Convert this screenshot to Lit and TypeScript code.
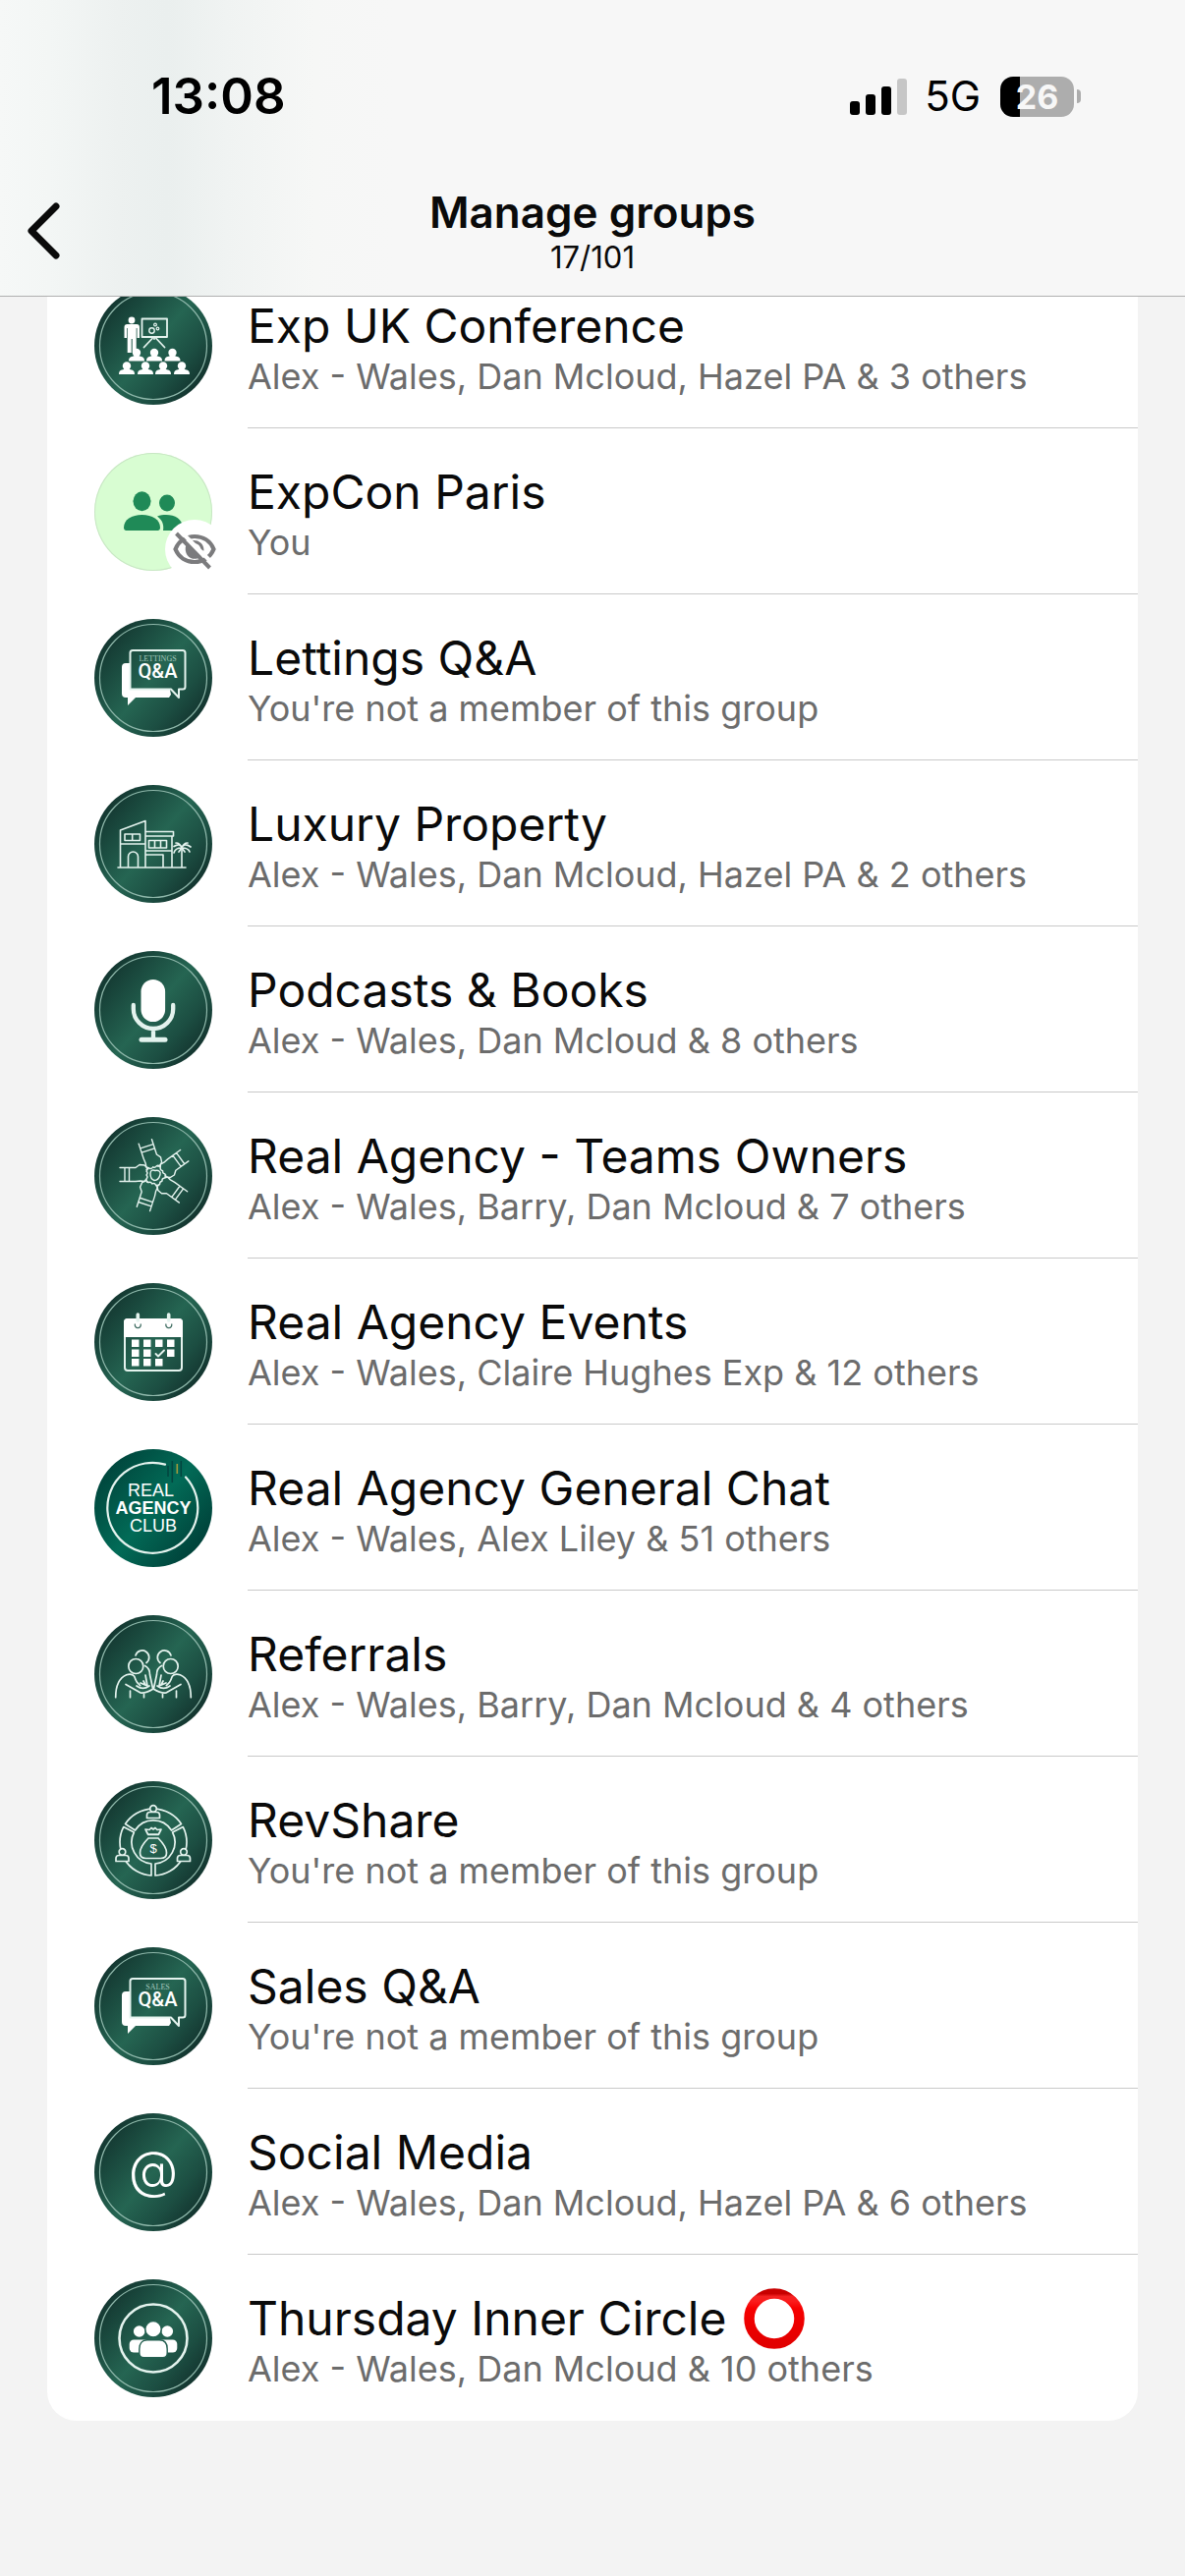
import { css, html, LitElement, nothing, svg, SVGTemplateResult } from "lit";
import { customElement, property } from "lit/decorators.js";
import { classMap } from "lit/directives/class-map.js";

type Group = {
  icon: string;
  name: string;
  members: string;
  ring?: boolean;
};

const groups: Group[] = [
  {
    icon: "conference",
    name: "Exp UK Conference",
    members: "Alex - Wales, Dan Mcloud, Hazel PA & 3 others",
  },
  { icon: "hidden", name: "ExpCon Paris", members: "You" },
  {
    icon: "lettings",
    name: "Lettings Q&A",
    members: "You're not a member of this group",
  },
  {
    icon: "house",
    name: "Luxury Property",
    members: "Alex - Wales, Dan Mcloud, Hazel PA & 2 others",
  },
  {
    icon: "mic",
    name: "Podcasts & Books",
    members: "Alex - Wales, Dan Mcloud & 8 others",
  },
  {
    icon: "hands",
    name: "Real Agency - Teams Owners",
    members: "Alex - Wales, Barry, Dan Mcloud & 7 others",
  },
  {
    icon: "calendar",
    name: "Real Agency Events",
    members: "Alex - Wales, Claire Hughes Exp & 12 others",
  },
  {
    icon: "club",
    name: "Real Agency General Chat",
    members: "Alex - Wales, Alex Liley & 51 others",
  },
  {
    icon: "referrals",
    name: "Referrals",
    members: "Alex - Wales, Barry, Dan Mcloud & 4 others",
  },
  {
    icon: "revshare",
    name: "RevShare",
    members: "You're not a member of this group",
  },
  {
    icon: "sales",
    name: "Sales Q&A",
    members: "You're not a member of this group",
  },
  {
    icon: "social",
    name: "Social Media",
    members: "Alex - Wales, Dan Mcloud, Hazel PA & 6 others",
  },
  {
    icon: "circle",
    name: "Thursday Inner Circle",
    members: "Alex - Wales, Dan Mcloud & 10 others",
    ring: true,
  },
];

const audience = [
  [43, 67],
  [61, 67],
  [79.5, 67],
  [33, 80.5],
  [52, 80.5],
  [70, 80.5],
  [89, 80.5],
];

const days = [
  [38, 57.5],
  [50, 57.5],
  [62, 57.5],
  [74, 57.5],
  [38, 67.5],
  [50, 67.5],
  [74, 67.5],
  [38, 77],
  [50, 77],
  [62, 77],
];

const qa = (label: string) => svg`
  <path class="solid" d="M36 45h-4a4 4 0 0 0-4 4v27a4 4 0 0 0 4 4h2v8l8-8h34l2-3-1-5H36z" />
  <path
    class="line"
    stroke-width="2"
    d="M39 32h51a2.5 2.5 0 0 1 2.5 2.5V69a2.5 2.5 0 0 1-2.5 2.5h-4V80l-8-8.5H36.5v-37A2.5 2.5 0 0 1 39 32z"
  />
  <text class="serif" x="64.5" y="43" text-anchor="middle">${label}</text>
  <text class="qa" x="64.5" y="60" text-anchor="middle">Q&amp;A</text>
`;

const icons: Record<string, () => SVGTemplateResult> = {
  conference: () => svg`
    <circle class="solid" cx="38" cy="34" r="3.4" />
    <path class="solid" d="M34 38h9a3 3 0 0 1 3 3v11h-2.5V42h-.8v25h-4V53h-1v14h-4V42H33v10h-2.5V41a3 3 0 0 1 3-3z" />
    <path class="line" stroke-width="1.8" d="M48.5 32.5H74V51H48.5zM61 51v2M59 52.5l-8.5 9M63 52.5l8.5 9" />
    <circle class="line" stroke-width="1.4" cx="58.5" cy="44.5" r="2.7" />
    <circle class="line" stroke-width="1.2" cx="62" cy="38.5" r="1.4" />
    <circle class="line" stroke-width="1.2" cx="64.5" cy="42.5" r="1.3" />
    ${audience.map(
      ([x, y]) => svg`
        <circle class="solid" cx=${x} cy=${y} r="4.2" />
        <path class="solid" transform="translate(${x} ${y})" d="M-8 8.5c0-3 1-4 4-4.7l2-.8h4l2 .8c3 .7 4 1.7 4 4.7z" />
      `
    )}
  `,
  hidden: () => svg`
    <g fill="#1f8a57">
      <ellipse cx="48.5" cy="49.3" rx="9" ry="10" />
      <path d="M30 76c0-8 8-13 18.5-13S67 68 67 76c0 2-1 3-2.5 3h-32C31 79 30 78 30 76z" />
      <ellipse cx="74" cy="51" rx="8" ry="8.5" />
      <path d="M64 64.5c3-1.2 6-1.5 9-1.5 9 0 17 4.5 17 13 0 2-1 3-2.5 3H70c1-6-1-11-6-14.5z" />
    </g>
    <circle cx="102" cy="98" r="30" fill="#fff" />
    <g fill="none" stroke="#7b7b7d">
      <path stroke-width="4.2" d="M82.5 98c3.5-8.5 11-13 19.5-13s16 4.5 19.5 13c-3.5 8.5-11 13-19.5 13s-16-4.5-19.5-13z" />
      <path stroke-width="3" d="M100 90.5c6-.5 10 3 10 9" />
    </g>
    <path fill="#7b7b7d" d="M95 91.5L108.5 105a9 9 0 0 1-15-3c-1.5-4-1-8 1.5-10.5z" />
    <path stroke="#fff" stroke-width="4" d="M87 79l36 36" />
    <path stroke="#7b7b7d" stroke-width="4" d="M83.5 82l34 35" />
  `,
  lettings: () => qa("LETTINGS"),
  house: () => svg`
    <path
      class="line"
      stroke-width="1.6"
      d="M24 84h69M26.5 84V46L52 36.5V84M26.5 60H52M31 50h15.5v6.5H31zM38.7 50v6.5M34.5 84V73a5 5 0 0 1 10 0v11M52 47.5h28.5V52H52M79 52v32M55.5 56.5h18V64h-18zM61.5 56.5V64M67.5 56.5V64M52 67h27M52 71h18v13M89 65v19"
    />
    <path
      class="line"
      stroke-width="1.7"
      d="M89 64c-1-4-4-4-8-1.5M89 64c-1-3-3-5-6-5M89 64c1-3 3-5 6-5M89 64c1-4 5-4 9-1M89 64c-4 0-7 1-8 5M89 64c4 0 7 1 8 4M89 64l-3 4M89 64l3 4"
    />
  `,
  mic: () => svg`
    <rect class="solid" x="47.5" y="29" width="24.6" height="43" rx="12.3" />
    <path class="line" stroke-width="4.3" d="M39.8 55v4a20.2 20 0 0 0 40.4 0v-4M60 79v11" />
    <path class="line" stroke-width="5" d="M48 90.3h24" />
  `,
  hands: () => svg`
    <g class="line" stroke-width="1.4" transform="translate(62 59.5)">
      ${[0, 72, 144, 216, 288].map(
        (angle) => svg`
          <path
            transform="rotate(${angle})"
            d="M-36-8h16M-36 6h16M-31-8V6M-26.5-8V6M-20-8l4-3 5 .5 2 2q2 2 0 4q2 2 0 4q2 2 0 4l-2 2.5-4-.5-5 .5M-9-6l2-1"
          />
        `
      )}
      <path d="M-5-2c0-4 3-4 5-3 3-1 6 1 5 4-1 4-3 6-6 6-3-1-4-3-4-7z" />
    </g>
  `,
  calendar: () => svg`
    <rect class="line" stroke-width="2" x="31" y="37" width="58" height="52" rx="3" />
    <path class="solid" d="M30 40a4 4 0 0 1 4-4h52a4 4 0 0 1 4 4v15H30z" />
    <path class="line" stroke-width="3.6" d="M44.3 32v6M75.7 32v6" />
    <path fill="none" stroke="#3f6d62" stroke-width="1.3" d="M41.5 41.5a3 3 0 1 0 5.6 0M73 41.5a3 3 0 1 0 5.6 0" />
    ${days.map(
      ([x, y]) => svg`<rect class="solid" x=${x} y=${y} width="7.5" height="7.5" />`
    )}
    <path class="line" stroke-width="1.9" d="M62.5 72l2.5 2.5 6-6" />
  `,
  club: () => svg`
    <path class="line" stroke-width="2.2" d="M72 15.6A46 46 0 1 0 93 28.5" />
    <path stroke="#03443f" stroke-width="1.5" d="M75 17v11M79.3 12v22M88.3 12v16" />
    <path stroke="#a29a3c" stroke-width="1.6" d="M84.3 15v10" />
    <text class="club" x="57.5" y="48" text-anchor="middle">REAL</text>
    <text class="club bold" x="60" y="66" text-anchor="middle">AGENCY</text>
    <text class="club" x="60" y="84" text-anchor="middle">CLUB</text>
  `,
  referrals: () => svg`
    <g class="line" stroke-width="1.7">
      ${[0, 1].map(
        (side) => svg`
          <g transform=${side ? "translate(120 0) scale(-1 1)" : nothing}>
            <circle cx="42.3" cy="52" r="7.5" />
            <path d="M42 41a7 7 0 1 1 11 7.5" />
            <path d="M21.7 83.7c0-12 4-20 11-23 3-1 6-1 8 1.5 1 3 2 5 3 6.5l3 3M32 70.5l15 8.5c4 1 8-1 13-4M36.5 77v6.7M50.5 80.5v3.2M51.5 51.5c4 2 5 5 5 9l3 14M52 61l2 11-7-3M43 72c4 3 9 3 13 0M50 67l2 4" />
          </g>
        `
      )}
    </g>
  `,
  revshare: () => svg`
    <g class="line" stroke-width="1.7">
      <path d="M31.5 43.5a34 34 0 0 1 57 0L78.5 50a22 22 0 0 0-37 0z" />
      <path d="M29.7 46.6L40.4 52A22 22 0 0 0 58 84v12A34 34 0 0 1 29.7 46.6z" />
      <path d="M90.3 46.6L79.6 52A22 22 0 0 1 62 84v12A34 34 0 0 0 90.3 46.6z" />
      ${[
        [60, 28],
        [28.5, 72],
        [91, 72],
      ].map(
        ([x, y]) => svg`
          <g class="person" transform="translate(${x} ${y})">
            <circle r="3.3" />
            <path d="M-6.5 9.5v-3c0-2 1-3 3-3h7c2 0 3 1 3 3v3z" />
          </g>
        `
      )}
      <path d="M54.5 54l-2.5-5 4 .5 2-2 2 1.5 2-1.5 2 2 4-.5-2.5 5zM55 54.5h10M55 58h10M55 58c-4 4-8.5 9-8.5 15 0 4 3 5.5 6 5.5h15c3 0 6-1.5 6-5.5 0-6-4.5-11-8.5-15" />
    </g>
    <text class="dollar" x="60" y="73" text-anchor="middle">$</text>
  `,
  sales: () => qa("SALES"),
  social: () => svg`<text class="at" x="60" y="76" text-anchor="middle">@</text>`,
  circle: () => svg`
    <circle class="line" stroke-width="2.6" cx="60" cy="60" r="34.5" />
    <circle class="solid" cx="45.7" cy="53" r="5.8" />
    <circle class="solid" cx="74.3" cy="53" r="5.8" />
    <rect class="solid" x="35.7" y="61.5" width="20" height="13" rx="4.5" />
    <rect class="solid" x="64.3" y="61.5" width="20" height="13" rx="4.5" />
    <g class="cutout">
      <circle cx="60" cy="50.7" r="8.2" />
      <path d="M45.8 71c0-6 3-9.2 8-9.2h12.4c5 0 8 3.2 8 9.2v4c0 3-1.5 4.7-4.5 4.7H50.3c-3 0-4.5-1.7-4.5-4.7z" />
    </g>
  `,
};

@customElement("group-avatar")
export class GroupAvatar extends LitElement {
  @property({ type: String })
  icon = "";

  static styles = css`
    :host {
      display: block;
    }

    .avatar {
      display: block;
      width: 120px;
      height: 120px;
      border-radius: 50%;
      overflow: visible;
      background: linear-gradient(
        130deg,
        #12322d 10%,
        #1b4c40 30%,
        #256552 50%,
        #1c4e42 70%,
        #112e2a 90%
      );
    }

    .avatar.hidden {
      background: #d8fdd2;
      box-shadow: inset 0 0 0 1px #c8e6c4;
    }

    .avatar.club {
      background: linear-gradient(130deg, #00473d 14%, #026b57 50%, #00423a 86%);
    }

    .rim {
      fill: none;
      stroke: #8fb8ab;
      stroke-width: 1.2px;
    }

    .solid {
      fill: #fff;
    }

    .line {
      fill: none;
      stroke: #e4f3ee;
      stroke-linecap: round;
      stroke-linejoin: round;
    }

    .person {
      fill: #1f5a4b;
    }

    .cutout {
      fill: #fff;
      stroke: #235f50;
      stroke-width: 1.4px;
    }

    text {
      fill: #fff;
      font-family: "Liberation Sans", sans-serif;
    }

    text.serif {
      fill: #a5c8bd;
      font-family: "Liberation Serif", serif;
      font-size: 8px;
    }

    text.qa {
      font-family: Roboto, sans-serif;
      font-size: 20px;
      font-weight: 500;
    }

    text.club {
      font-size: 18px;
    }

    text.bold {
      font-weight: 700;
    }

    text.dollar {
      font-size: 13px;
    }

    text.at {
      font-family: Inter, sans-serif;
      font-size: 52px;
      font-weight: 300;
    }
  `;

  render() {
    const hidden = this.icon === "hidden";
    const club = this.icon === "club";

    return html`
      <svg
        class="avatar ${classMap({ hidden, club })}"
        viewBox="0 0 120 120"
        aria-hidden="true"
      >
        ${hidden || club
          ? nothing
          : svg`<circle class="rim" cx="60" cy="60" r="54.5" />`}
        ${icons[this.icon]?.()}
      </svg>
    `;
  }
}

@customElement("status-bar")
export class StatusBar extends LitElement {
  static styles = css`
    :host {
      display: flex;
      align-items: center;
      justify-content: space-between;
      padding: 68px 106px 0 154px;
      color: #000;
    }

    .time {
      font-size: 51px;
      font-weight: 600;
      line-height: 60px;
    }

    .indicators {
      display: flex;
      align-items: center;
    }

    .signal {
      width: 58px;
      height: 37px;
      margin-right: 18px;
    }

    .network {
      font-size: 42px;
      line-height: 60px;
      margin-right: 20px;
    }

    .battery {
      width: 75px;
      border-radius: 13px;
      background: linear-gradient(90deg, #000 20px, #adadad 20px);
      color: #f7f7f7;
      font-size: 34px;
      font-weight: 700;
      line-height: 41px;
      text-align: center;
    }

    .cap {
      width: 4px;
      height: 14px;
      margin-left: 3px;
      border-radius: 0 4px 4px 0;
      background: #adadad;
    }
  `;

  render() {
    return html`
      <span class="time">13:08</span>
      <div class="indicators">
        <svg class="signal" viewBox="0 0 58 37" aria-hidden="true">
          <rect y="23" width="10" height="14" rx="3" />
          <rect x="16" y="16" width="10" height="21" rx="3" />
          <rect x="32" y="8" width="10" height="29" rx="3" />
          <rect x="48" width="10" height="37" rx="3" fill="#c6c6c6" />
        </svg>
        <span class="network">5G</span>
        <span class="battery">26</span>
        <span class="cap"></span>
      </div>
    `;
  }
}

@customElement("app-root")
export class AppRoot extends LitElement {
  static styles = css`
    :host {
      display: block;
      min-height: 100vh;
      background: #f3f3f3;
      color: #0a0a0a;
      font-family: Inter, "Liberation Sans", sans-serif;
    }

    .header {
      position: sticky;
      top: 0;
      z-index: 1;
      border-bottom: 1px solid #b0b0b0;
      background: linear-gradient(
        90deg,
        #f6f8f7 0,
        #f3f6f5 50px,
        #edf1f0 120px,
        #eaefee 170px,
        #f0f3f2 230px,
        #f6f7f6 320px,
        #f7f7f7 400px
      );
    }

    .bar {
      display: grid;
      grid-template-columns: 90px 1fr 90px;
      align-items: center;
      padding: 61px 0 20px;
    }

    .back {
      display: flex;
      padding: 0 0 0 24px;
      border: none;
      background: none;
      color: inherit;
    }

    .heading {
      text-align: center;
    }

    h1 {
      margin: 0;
      font-size: 44px;
      font-weight: 600;
      line-height: 54px;
    }

    .count {
      margin: 0;
      font-size: 31px;
      line-height: 38px;
    }

    .content {
      overflow: hidden;
      padding: 0 48px 158px;
    }

    /* The list is scrolled, its first row lies partly under the header. */
    .groups {
      list-style: none;
      margin: -35px 0 0;
      padding: 0;
      border-radius: 30px;
      background: #fff;
    }

    .row {
      display: grid;
      grid-template-columns: 120px 1fr;
      align-items: center;
      column-gap: 36px;
      padding-left: 48px;
      color: inherit;
      text-decoration: none;
    }

    .text {
      display: flex;
      flex-direction: column;
      padding: 35px 0 30px;
      border-bottom: 1px solid #c9c9c9;
      white-space: nowrap;
    }

    li:last-child .text {
      padding-bottom: 31px;
      border-bottom: none;
    }

    .name {
      display: flex;
      align-items: center;
      gap: 18px;
      font-size: 48px;
      line-height: 60px;
    }

    .ring {
      width: 62px;
      height: 62px;
      margin: -1px 0;
    }

    .members {
      color: #6c6c6c;
      font-size: 36px;
      line-height: 43px;
    }
  `;

  render() {
    return html`
      <header class="header">
        <status-bar></status-bar>
        <div class="bar">
          <button class="back" aria-label="Back">
            <svg width="40" height="60" viewBox="0 0 40 60" aria-hidden="true">
              <path
                d="M33 5L8 30l25 25"
                fill="none"
                stroke="currentColor"
                stroke-width="7"
                stroke-linecap="round"
                stroke-linejoin="round"
              />
            </svg>
          </button>
          <div class="heading">
            <h1>Manage groups</h1>
            <p class="count">17/101</p>
          </div>
        </div>
      </header>
      <main class="content">
        <ul class="groups">
          ${groups.map((group) => this.row(group))}
        </ul>
      </main>
    `;
  }

  row(group: Group) {
    return html`
      <li>
        <a class="row" href="#${group.icon}">
          <group-avatar .icon=${group.icon}></group-avatar>
          <div class="text">
            <span class="name">
              ${group.name}${group.ring ? this.ring() : nothing}
            </span>
            <span class="members">${group.members}</span>
          </div>
        </a>
      </li>
    `;
  }

  ring() {
    return html`
      <svg class="ring" viewBox="0 0 62 62" role="img" aria-label="Red circle">
        <defs>
          <linearGradient id="gloss" x1="0" y1="0" x2="0" y2="1">
            <stop offset="0" stop-color="#c80000" />
            <stop offset="0.06" stop-color="#f42222" />
            <stop offset="0.16" stop-color="#fb1a1a" />
            <stop offset="0.3" stop-color="#f60000" />
            <stop offset="1" stop-color="#e20000" />
          </linearGradient>
        </defs>
        <circle
          cx="31"
          cy="31"
          r="25.5"
          fill="none"
          stroke="url(#gloss)"
          stroke-width="10.5"
        />
      </svg>
    `;
  }
}
